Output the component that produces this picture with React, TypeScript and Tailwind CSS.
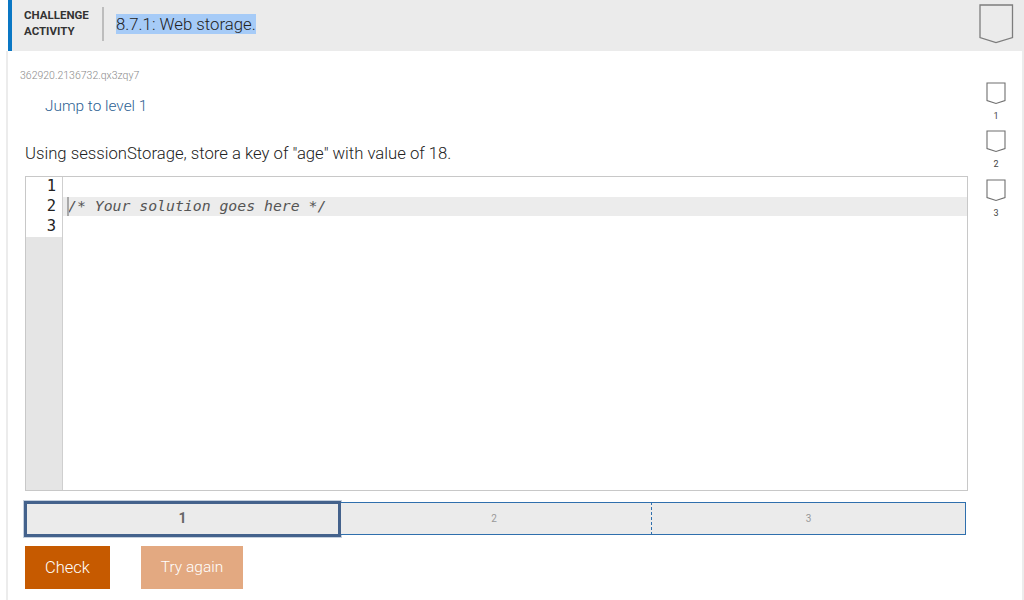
const roboto = "font-['Roboto','Liberation_Sans',sans-serif]";

function Badge({ size }: { size: "lg" | "sm" }) {
  if (size === "lg") {
    return (
      <svg width="35" height="40" viewBox="0 0 35 40" className="block">
        <path d="M1 1H33.5V33.5L17 38.5L1 33.5Z" fill="none" stroke="#7d7d7d" strokeWidth="1.3" />
      </svg>
    );
  }
  return (
    <svg width="20" height="24" viewBox="0 0 20 24" className="block">
      <path d="M1 1H19V18.5L10 21.5L1 18.5Z" fill="none" stroke="#6f6f6f" strokeWidth="1.1" />
    </svg>
  );
}

function LevelBadge({ n }: { n: number }) {
  return (
    <div className="flex h-[48.4px] w-[20px] flex-col items-center">
      <Badge size="sm" />
      <span className="mt-[4px] text-[9px] leading-[12px] text-[#444]">{n}</span>
    </div>
  );
}

export default function App() {
  return (
    <div className={`${roboto} flex h-[600px] w-[1024px] overflow-hidden bg-white text-[#333]`}>
      <div className="flex w-[1024px] flex-col">
        <header className="ml-[8px] flex h-[51px] w-[1016px] shrink-0 items-center border-l-4 border-[#0a77c4] bg-[#ebebeb]">
          <div className="ml-[12px] mt-[-6px] w-[78px] text-[11.5px] font-bold leading-[16px] text-[#333]">
            CHALLENGE
            <br />
            ACTIVITY
          </div>
          <div className="mt-[-4px] h-[34px] w-[2px] bg-[#bdbdbd]" />
          <div className="ml-[12px] mt-[-3px] text-[16.75px] font-light leading-[23px] text-[#222]">
            <span className="bg-[#a6cbf7]">8.7.1: Web storage.</span>
          </div>
          <div className="ml-auto mr-[10px] mt-[-3px]">
            <Badge size="lg" />
          </div>
        </header>

        <div className="ml-[6px] flex flex-1 border-l-2 border-[#ececec]">
          <main className="w-[961px] pl-[12px]">
            <div className="mt-[19px] text-[10.5px] font-light leading-[12px] text-[#8a8a8a]">362920.2136732.qx3zqy7</div>
            <div className="ml-[25px] mt-[14px] text-[15.4px] font-light leading-[20px] text-[#2d5f93]">Jump to level 1</div>
            <p className="ml-[5px] mt-[27px] text-[16.7px] font-light leading-[22px] text-[#222]">
              Using sessionStorage, store a key of "age" with value of 18.
            </p>

            <div className="ml-[5px] mt-[11px] flex h-[315px] w-[943px] border border-[#c8c8c8]">
              <div className="w-[37px] shrink-0 border-r border-[#cfcfcf] bg-[#e5e5e5]">
                <div className="bg-white pr-[6px] text-right font-['DejaVu_Sans_Mono',monospace] text-[15.5px] leading-[18px] text-[#222]">
                  <div className="h-[20px]">1</div>
                  <div className="h-[20px]">2</div>
                  <div className="h-[20px]">3</div>
                </div>
              </div>
              <div className="flex-1 pt-[20px] font-['DejaVu_Sans_Mono',monospace] text-[14.8px] italic leading-[18px] text-[#555]">
                <div className="relative h-[19px] whitespace-pre bg-[#ececec] pl-[5px]">
                  <span className="absolute left-[4px] top-0 h-[19px] w-[2px] bg-[#aaa]" />
                  {"/* Your solution goes here */"}
                </div>
              </div>
            </div>

            <div className="ml-[4px] mt-[10px] flex h-[36px] w-[942px] items-start">
              <div className="flex h-[36px] w-[317px] items-center justify-center border-[3px] border-[#44628c] bg-[#ebebeb] pb-[2px] text-[14px] font-bold text-[#666] ring-1 ring-[#c5d0de]">1</div>
              <div className="mt-[1px] flex h-[33px] w-[310px] items-center justify-center border-y border-[#2f6fad] bg-[#ebebeb] pr-[4px] text-[10px] text-[#999]">2</div>
              <div className="mt-[1px] flex h-[33px] flex-1 items-center justify-center border border-[#2f6fad] bg-[#ebebeb] text-[10px] text-[#999] [border-left-style:dashed]">3</div>
            </div>

            <div className="ml-[5px] mt-[9px] flex gap-[31px]">
              <div className="flex h-[43px] w-[85px] items-center justify-center bg-[#c65a00] pt-[1px] text-[16.5px] font-light text-white">Check</div>
              <div className="flex h-[43px] w-[102px] items-center justify-center bg-[#e3a981] text-[15.5px] font-light text-white">Try again</div>
            </div>
          </main>

          <aside className="flex w-[55px] flex-col items-center border-r-2 border-[#ececec] pl-[1px] pt-[31px]">
            <LevelBadge n={1} />
            <LevelBadge n={2} />
            <LevelBadge n={3} />
          </aside>
        </div>
      </div>
    </div>
  );
}
